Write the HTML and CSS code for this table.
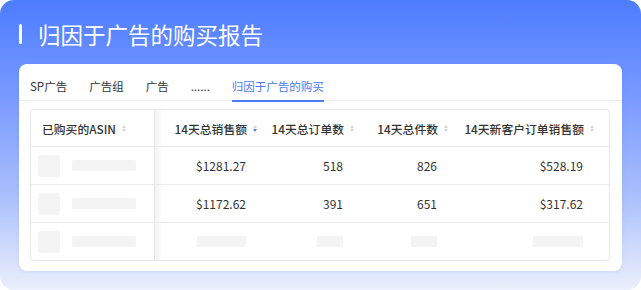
FILE: index.html
```html
<!DOCTYPE html>
<html lang="zh">
<head>
<meta charset="utf-8">
<link rel="stylesheet" href="styles.css">
</head>
<body>
<div class="panel">
  <div class="title"><span class="title-bar"></span><span>归因于广告的购买报告</span></div>
  <div class="card">
    <div class="tabs">
      <div class="tab">SP广告</div>
      <div class="tab">广告组</div>
      <div class="tab">广告</div>
      <div class="tab">......</div>
      <div class="tab active">归因于广告的购买</div>
    </div>
    <div class="table">
      <div class="th first">已购买的ASIN<span class="sort"><i class="up"></i><i class="down"></i></span></div>
      <div class="th shade">14天总销售额<span class="sort"><i class="up"></i><i class="down on"></i></span></div>
      <div class="th">14天总订单数<span class="sort"><i class="up"></i><i class="down"></i></span></div>
      <div class="th">14天总件数<span class="sort"><i class="up"></i><i class="down"></i></span></div>
      <div class="th">14天新客户订单销售额<span class="sort"><i class="up"></i><i class="down"></i></span></div>

      <div class="td first"><span class="sk-img"></span><span class="sk-bar w64"></span></div>
      <div class="td shade">$1281.27</div>
      <div class="td">518</div>
      <div class="td">826</div>
      <div class="td">$528.19</div>

      <div class="td first"><span class="sk-img"></span><span class="sk-bar w64"></span></div>
      <div class="td shade">$1172.62</div>
      <div class="td">391</div>
      <div class="td">651</div>
      <div class="td">$317.62</div>

      <div class="td first last"><span class="sk-img"></span><span class="sk-bar w64"></span></div>
      <div class="td shade last"><span class="sk-bar w49"></span></div>
      <div class="td last"><span class="sk-bar w26"></span></div>
      <div class="td last"><span class="sk-bar w26"></span></div>
      <div class="td last"><span class="sk-bar w50"></span></div>
    </div>
  </div>
</div>
</body>
</html>
```

FILE: styles.css
```css
* { box-sizing: border-box; }
html, body { margin: 0; padding: 0; background: #ffffff; }
body {
  font-family: "Noto Sans CJK SC", "Noto Sans", sans-serif;
  color: #333;
}
.panel {
  width: 641px;
  height: 290px;
  border-radius: 14px;
  background: linear-gradient(180deg, #4c7cff 0%, #7b9bff 35%, #aac0fc 68%, #ecf0fc 100%);
  padding: 19px 19px 0 19px;
}
.title {
  display: flex;
  align-items: center;
  height: 30px;
  font-size: 22.5px;
  line-height: 30px;
  font-weight: 400;
  color: #fff;
  margin-bottom: 15px;
}
.title-bar {
  width: 3px;
  height: 20px;
  background: #fff;
  border-radius: 2px;
  margin-right: 16px;
}
.card {
  background: #fff;
  border-radius: 8px;
  height: 207px;
  padding: 0 12px 0 11px;
  box-shadow: 0 1px 3px rgba(70, 100, 190, 0.12);
}
.tabs {
  display: flex;
  gap: 22px;
  height: 37px;
  border-bottom: 1px solid #ececec;
  margin: 0 -12px 0 -11px;
  padding-left: 11px;
}
.tab {
  font-size: 11.5px;
  line-height: 18px;
  padding-top: 13px;
  height: 38px;
  color: #333;
  white-space: nowrap;
  border-bottom: 2px solid transparent;
}
.tab.active {
  color: #4b7bf5;
  border-bottom-color: #4b7bf5;
}
.table {
  margin-top: 8px;
  border: 1px solid #e8e8e8;
  border-radius: 4px;
  display: grid;
  grid-template-columns: 124px 117px 97px 94px 146px;
  grid-template-rows: 37px 38px 38px 37px;
  overflow: hidden;
}
.th, .td {
  display: flex;
  align-items: center;
  justify-content: flex-end;
  white-space: nowrap;
  border-bottom: 1px solid #ebebeb;
}
.th {
  font-size: 11.8px;
  font-weight: 500;
  color: #333;
  padding-right: 15px;
}
.td {
  font-size: 12px;
  color: #333;
  padding-right: 26px;
}
.last { border-bottom: none; }
.first {
  justify-content: flex-start;
  border-right: 1px solid #e8e8e8;
}
.th.first { padding-left: 11px; }
.td.first { padding-left: 7px; }
.shade {
  background-image: linear-gradient(90deg, rgba(0, 0, 0, 0.05), rgba(0, 0, 0, 0) 8px);
}
.sort {
  display: inline-flex;
  flex-direction: column;
  gap: 1px;
  margin-left: 6px;
}
.sort i {
  display: block;
  width: 0;
  height: 0;
  border-left: 2.5px solid transparent;
  border-right: 2.5px solid transparent;
}
.sort .up { border-bottom: 3px solid #d6d6d6; }
.sort .down { border-top: 3px solid #d6d6d6; }
.sort .down.on { border-top-color: #4b7bf5; }
.sk-img {
  flex: none;
  width: 22px;
  height: 22px;
  border-radius: 3px;
  background: #f4f4f4;
  margin-right: 12px;
}
.sk-bar {
  flex: none;
  display: block;
  height: 11px;
  border-radius: 2px;
  background: #f4f4f4;
}
.w64 { width: 64px; }
.w49 { width: 49px; }
.w50 { width: 50px; }
.w26 { width: 26px; }
```
